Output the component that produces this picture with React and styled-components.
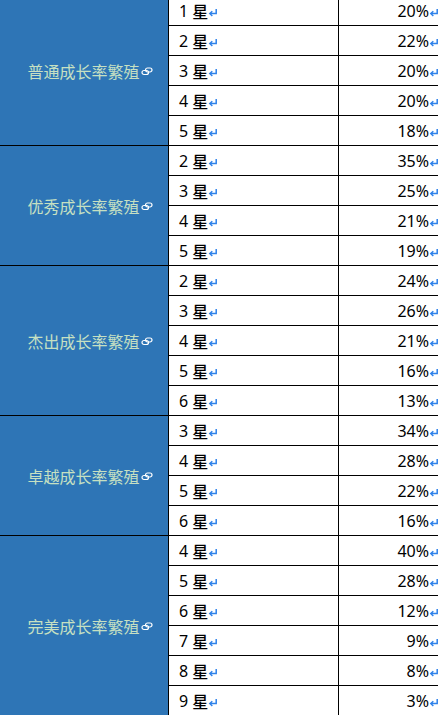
import React from "react";
import styled, { createGlobalStyle } from "styled-components";

const GlobalStyle = createGlobalStyle`
  html, body {
    margin: 0;
    padding: 0;
    background: #ffffff;
    overflow: hidden;
  }
  body {
    font-family: "Noto Sans", "Noto Sans CJK SC", sans-serif;
  }
`;

const Table = styled.div`
  display: grid;
  grid-template-columns: 168px 169px 100px;
  grid-auto-rows: 29px;
  gap: 1px;
  background: #000000;
  width: 440px;
  margin-top: -4px;
`;

const GroupCell = styled.div`
  grid-column: 1;
  grid-row: span ${(p) => p.$span};
  background: #2e75b6;
  color: #c6e0c2;
  font-family: "Noto Sans CJK SC", "Noto Sans", sans-serif;
  font-size: 16px;
  display: flex;
  align-items: center;
  justify-content: center;
  padding-left: 12px;
  white-space: nowrap;
`;

const StarCell = styled.div`
  grid-column: 2;
  background: #ffffff;
  color: #000000;
  font-size: 16px;
  display: flex;
  align-items: center;
  padding-left: 10px;
  white-space: nowrap;
`;

const RateCell = styled.div`
  grid-column: 3;
  background: #ffffff;
  color: #000000;
  font-size: 16px;
  display: flex;
  align-items: center;
  justify-content: flex-end;
  white-space: nowrap;
`;

const Star = styled.span`
  font-family: "Noto Sans CJK SC", sans-serif;
  font-weight: 500;
  margin-left: 4px;
`;

const MarkSvg = styled.svg`
  display: inline-block;
  flex: none;
  margin-top: 3px;
`;

const ReturnMark = () => (
  <MarkSvg width="10" height="9" viewBox="0 0 10 9">
    <path d="M8.2 1 V5.6 H2" fill="none" stroke="#2f82ea" strokeWidth="1.5" />
    <path d="M4.3 3.2 L1.8 5.6 L4.3 8" fill="none" stroke="#2f82ea" strokeWidth="1.5" />
  </MarkSvg>
);

const LinkSvg = styled.svg`
  display: inline-block;
  flex: none;
  margin-left: 1px;
  margin-top: 2px;
`;

const LinkMark = () => (
  <LinkSvg width="12" height="9" viewBox="0 0 12 9">
    <rect x="1" y="3.5" width="6.5" height="4" rx="2" fill="none" stroke="#ffffff" strokeWidth="1.2" />
    <rect x="4.5" y="1" width="6.5" height="4" rx="2" fill="none" stroke="#ffffff" strokeWidth="1.2" />
  </LinkSvg>
);

const groups = [
  { name: "普通成长率繁殖", rows: [["1", "20%"], ["2", "22%"], ["3", "20%"], ["4", "20%"], ["5", "18%"]] },
  { name: "优秀成长率繁殖", rows: [["2", "35%"], ["3", "25%"], ["4", "21%"], ["5", "19%"]] },
  { name: "杰出成长率繁殖", rows: [["2", "24%"], ["3", "26%"], ["4", "21%"], ["5", "16%"], ["6", "13%"]] },
  { name: "卓越成长率繁殖", rows: [["3", "34%"], ["4", "28%"], ["5", "22%"], ["6", "16%"]] },
  { name: "完美成长率繁殖", rows: [["4", "40%"], ["5", "28%"], ["6", "12%"], ["7", "9%"], ["8", "8%"], ["9", "3%"]] },
];

export default function App() {
  return (
    <>
      <GlobalStyle />
      <Table>
        {groups.map((g) => (
          <React.Fragment key={g.name}>
            <GroupCell $span={g.rows.length}>
              {g.name}
              <LinkMark />
            </GroupCell>
            {g.rows.map(([n, r]) => (
              <React.Fragment key={g.name + n}>
                <StarCell>
                  {n}
                  <Star>星</Star>
                  <ReturnMark />
                </StarCell>
                <RateCell>
                  {r}
                  <ReturnMark />
                </RateCell>
              </React.Fragment>
            ))}
          </React.Fragment>
        ))}
      </Table>
    </>
  );
}
